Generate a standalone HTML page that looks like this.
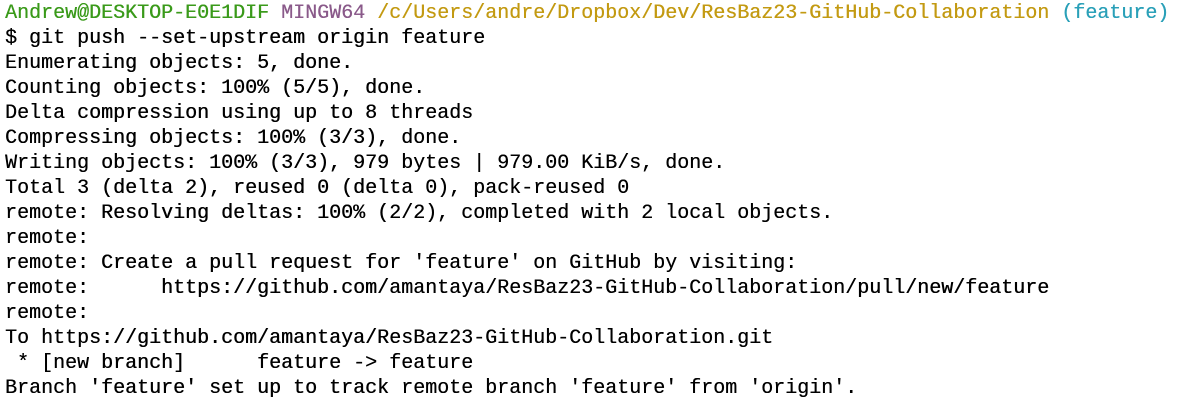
<!DOCTYPE html>
<html><head><meta charset="utf-8"><style>
html,body{margin:0;padding:0;background:#fff;width:1190px;height:409px;overflow:hidden}
pre{margin:0;padding:0 0 0 5px;font-family:"Liberation Mono",monospace;font-size:20px;line-height:25px;color:#000;position:absolute;top:1px;left:0;text-shadow:0.3px 0 0 currentColor}
.g{color:#3a9a1a}.m{color:#8a5a8a}.y{color:#c39a12}.c{color:#2aa0b8}
</style></head><body><pre><span class="g">Andrew@DESKTOP-E0E1DIF</span> <span class="m">MINGW64</span> <span class="y">/c/Users/andre/Dropbox/Dev/ResBaz23-GitHub-Collaboration</span> <span class="c">(feature)</span>
$ git push --set-upstream origin feature
Enumerating objects: 5, done.
Counting objects: 100% (5/5), done.
Delta compression using up to 8 threads
Compressing objects: 100% (3/3), done.
Writing objects: 100% (3/3), 979 bytes | 979.00 KiB/s, done.
Total 3 (delta 2), reused 0 (delta 0), pack-reused 0
remote: Resolving deltas: 100% (2/2), completed with 2 local objects.
remote:
remote: Create a pull request for 'feature' on GitHub by visiting:
remote:      https://github.com/amantaya/ResBaz23-GitHub-Collaboration/pull/new/feature
remote:
To https://github.com/amantaya/ResBaz23-GitHub-Collaboration.git
 * [new branch]      feature -&gt; feature
Branch 'feature' set up to track remote branch 'feature' from 'origin'.</pre></body></html>
